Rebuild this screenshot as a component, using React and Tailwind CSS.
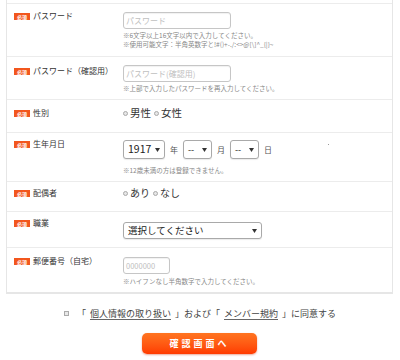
import React from 'react';

const jp = { fontFamily: '"Noto Sans CJK JP", "Noto Sans", sans-serif' };

function Badge() {
  return (
    <span className="flex h-[7px] w-[16px] shrink-0 items-center justify-center bg-[#f2561d] text-[5px] font-bold leading-none text-white">
      必須
    </span>
  );
}

function Label({ text, top }) {
  return (
    <div className={`flex h-[10px] w-[116px] shrink-0 items-center gap-[3px] pl-[7px] ${top}`}>
      <Badge />
      <span className="whitespace-nowrap text-[8px] leading-none text-[#333]">{text}</span>
    </div>
  );
}

function Note({ children, top }) {
  return <p className={`text-[6.5px] leading-[9px] text-[#888] whitespace-nowrap ${top}`}>{children}</p>;
}

function Caret() {
  return (
    <svg width="5" height="4" viewBox="0 0 5 4" className="shrink-0">
      <path d="M0 0 H5 L2.5 4 Z" fill="#333" />
    </svg>
  );
}

function SelectBox({ value, width, height, text }) {
  return (
    <div
      className={`flex items-center justify-between rounded-[3px] border border-[#a9a9a9] bg-white px-[4px] shadow-[0_1px_1px_rgba(0,0,0,0.08)] ${width} ${height}`}
    >
      <span className={`whitespace-nowrap leading-none text-[#222] ${text}`}>{value}</span>
      <Caret />
    </div>
  );
}

function Radio({ label, size }) {
  return (
    <span className="flex items-center gap-[2px]">
      <span className="h-[5px] w-[5px] rounded-full border border-[#aaa] bg-[#e6e6e6]" />
      <span className={`leading-none text-[#333] ${size}`}>{label}</span>
    </span>
  );
}

function TextInput({ placeholder, width, text }) {
  return (
    <div
      className={`flex h-[17px] items-center rounded-[3px] border border-[#c6c6c6] bg-white px-[2px] shadow-[inset_0_1px_1px_rgba(0,0,0,0.06)] ${width}`}
    >
      <span className={`whitespace-nowrap leading-none text-[#c0c0c0] ${text}`}>{placeholder}</span>
    </div>
  );
}

export default function App() {
  return (
    <div className="h-[360px] w-[400px] overflow-hidden bg-white" style={jp}>
      <div className="ml-[6px] w-[387px] border-x border-b-2 border-[#e6e6e6]">
        <div className="h-[3px]" />

        {/* パスワード */}
        <div className="flex h-[53px] border-t border-[#ececec]">
          <Label text="パスワード" top="mt-[7px]" />
          <div className="mt-[8px]">
            <TextInput placeholder="パスワード" width="w-[108px]" text="text-[8px]" />
            <Note top="mt-[2px]">※6文字以上16文字以内で入力してください。</Note>
            <Note>{'※使用可能文字：半角英数字と!#()+-./:<>@[\\]^_{|}~'}</Note>
          </div>
        </div>

        {/* パスワード確認 */}
        <div className="flex h-[43px] border-t border-[#ececec]">
          <Label text="パスワード（確認用）" top="mt-[9px]" />
          <div className="mt-[8px]">
            <TextInput placeholder="パスワード(確認用)" width="w-[108px]" text="text-[8px]" />
            <Note top="mt-[2px]">※上部で入力したパスワードを再入力してください。</Note>
          </div>
        </div>

        {/* 性別 */}
        <div className="flex h-[33px] border-t border-[#ececec]">
          <Label text="性別" top="mt-[8px]" />
          <div className="mt-[7px] flex h-[12px] items-center gap-[3px]">
            <Radio label="男性" size="text-[10.5px]" />
            <Radio label="女性" size="text-[10.5px]" />
          </div>
        </div>

        {/* 生年月日 */}
        <div className="relative flex h-[49px] border-t border-[#ececec]">
          <Label text="生年月日" top="mt-[6px]" />
          <div className="mt-[7px]">
            <div className="flex items-center gap-[5px]">
              <SelectBox value="1917" width="w-[42px]" height="h-[19px]" text="text-[10.5px]" />
              <span className="text-[8px] leading-none text-[#555]">年</span>
              <SelectBox value="--" width="w-[29px]" height="h-[19px]" text="text-[9px]" />
              <span className="text-[8px] leading-none text-[#555]">月</span>
              <SelectBox value="--" width="w-[29px]" height="h-[19px]" text="text-[9px]" />
              <span className="text-[8px] leading-none text-[#555]">日</span>
            </div>
            <Note top="mt-[7px]">※12歳未満の方は登録できません。</Note>
          </div>
          <span className="absolute left-[321px] top-[11px] h-[1px] w-[1px] bg-[#999]" />
        </div>

        {/* 配偶者 */}
        <div className="flex h-[30px] border-t border-[#ececec]">
          <Label text="配偶者" top="mt-[6px]" />
          <div className="mt-[5px] flex h-[12px] items-center gap-[3px]">
            <Radio label="あり" size="text-[10px]" />
            <Radio label="なし" size="text-[10px]" />
          </div>
        </div>

        {/* 職業 */}
        <div className="flex h-[36px] border-t border-[#ececec]">
          <Label text="職業" top="mt-[6px]" />
          <div className="mt-[10px]">
            <SelectBox value="選択してください" width="w-[139px]" height="h-[17px]" text="text-[9.5px]" />
          </div>
        </div>

        {/* 郵便番号 */}
        <div className="flex h-[45px] border-t border-[#ececec]">
          <Label text="郵便番号（自宅）" top="mt-[8px]" />
          <div className="mt-[9px]">
            <TextInput placeholder="0000000" width="w-[47px]" text="text-[7.5px]" />
            <Note top="mt-[3px]">※ハイフンなし半角数字で入力してください。</Note>
          </div>
        </div>
      </div>

      {/* 同意 */}
      <div className="mt-[13px] flex h-[12px] items-center justify-center gap-[4px] text-[9px] leading-none text-[#444]">
        <span className="mr-[4px] h-[5px] w-[5px] border border-[#aaa] bg-[#e8e8e8]" />
        <span>「</span>
        <span className="underline decoration-[#666] underline-offset-2">個人情報の取り扱い</span>
        <span>」および「</span>
        <span className="underline decoration-[#666] underline-offset-2">メンバー規約</span>
        <span>」に同意する</span>
      </div>

      {/* ボタン */}
      <div className="mt-[14px] flex justify-center">
        <div className="ml-[-1px] flex h-[21px] w-[115px] items-center justify-center rounded-[5px] bg-gradient-to-b from-[#ff7420] to-[#ff3a00] shadow-[0_1px_2px_rgba(200,40,0,0.4)]">
          <span className="text-[9px] font-bold leading-none tracking-[3px] text-white">確認画面へ</span>
        </div>
      </div>
    </div>
  );
}
